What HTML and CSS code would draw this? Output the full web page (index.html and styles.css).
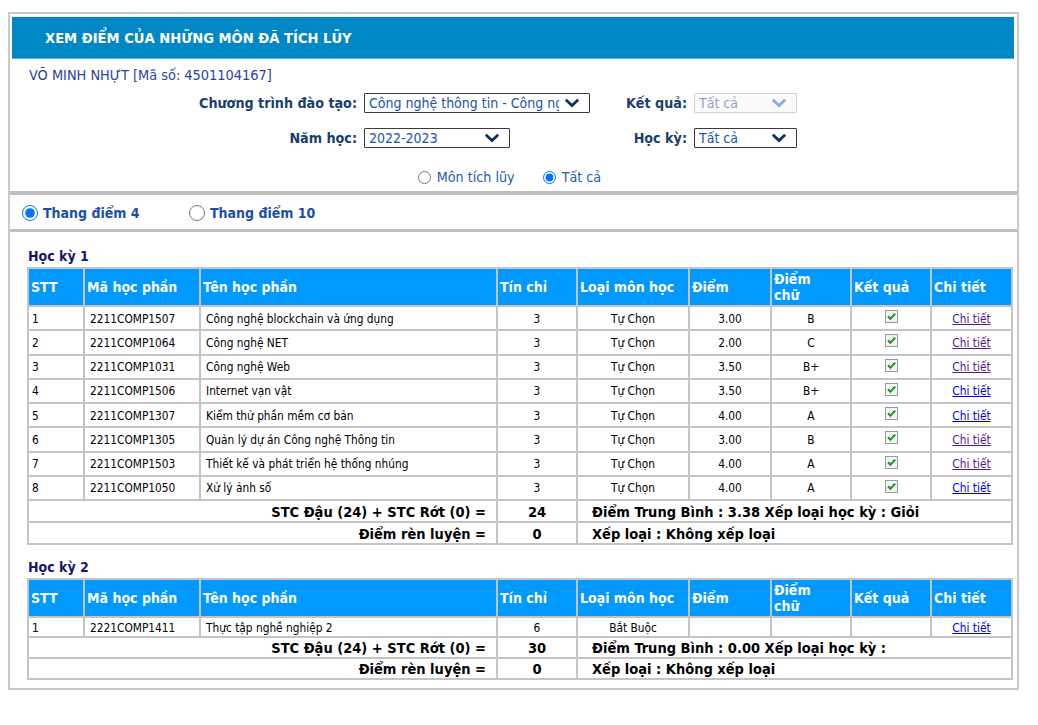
FILE: index.html
```html
<!DOCTYPE html>
<html lang="vi">
<head>
<meta charset="utf-8">
<title>Xem điểm</title>
<link rel="stylesheet" href="styles.css">
</head>
<body>
<div class="panel">
  <div class="titlebar">XEM ĐIỂM CỦA NHỮNG MÔN ĐÃ TÍCH LŨY</div>
  <div class="student">VÕ MINH NHỰT [Mã số: 4501104167]</div>

  <div class="filters">
    <div class="flabel">Chương trình đào tạo:</div>
    <div class="fcell"><div class="sel sel-wide"><span class="sel-text">Công nghệ thông tin - Công nghệ phần mềm</span><svg class="chev" width="16" height="10" viewBox="0 0 16 10"><path d="M1.8 1.8 L8 7.6 L14.2 1.8" fill="none" stroke="#0d2f6b" stroke-width="2.8"/></svg></div></div>
    <div class="flabel">Kết quả:</div>
    <div class="fcell"><div class="sel sel-small disabled"><span class="sel-text">Tất cả</span><svg class="chev" width="16" height="10" viewBox="0 0 16 10"><path d="M1.8 1.8 L8 7.6 L14.2 1.8" fill="none" stroke="#86ace6" stroke-width="2.8"/></svg></div></div>

    <div class="flabel">Năm học:</div>
    <div class="fcell"><div class="sel sel-mid"><span class="sel-text">2022-2023</span><svg class="chev" width="16" height="10" viewBox="0 0 16 10"><path d="M1.8 1.8 L8 7.6 L14.2 1.8" fill="none" stroke="#0d2f6b" stroke-width="2.8"/></svg></div></div>
    <div class="flabel">Học kỳ:</div>
    <div class="fcell"><div class="sel sel-small"><span class="sel-text">Tất cả</span><svg class="chev" width="16" height="10" viewBox="0 0 16 10"><path d="M1.8 1.8 L8 7.6 L14.2 1.8" fill="none" stroke="#0d2f6b" stroke-width="2.8"/></svg></div></div>
  </div>

  <div class="scope">
    <label class="opt"><input type="radio" name="scope">Môn tích lũy</label>
    <label class="opt"><input type="radio" name="scope" checked>Tất cả</label>
  </div>

  <div class="bar bar-thick"></div>

  <div class="scale">
    <label class="scale-opt"><input type="radio" name="scale" checked>Thang điểm 4</label>
    <label class="scale-opt"><input type="radio" name="scale">Thang điểm 10</label>
  </div>

  <div class="bar"></div>

  <div class="semester">
    <div class="sem-title">Học kỳ 1</div>
    <table class="grades">
      <thead>
        <tr class="head">
          <th class="c-stt">STT</th>
          <th class="c-ma">Mã học phần</th>
          <th class="c-ten">Tên học phần</th>
          <th class="c-tc">Tín chỉ</th>
          <th class="c-loai">Loại môn học</th>
          <th class="c-diem">Điểm</th>
          <th class="c-chu">Điểm<br>chữ</th>
          <th class="c-kq">Kết quả</th>
          <th class="c-ct">Chi tiết</th>
        </tr>
      </thead>
      <tbody>
        <tr class="row"><td class="stt">1</td><td class="code">2211COMP1507</td><td class="name">Công nghệ blockchain và ứng dụng</td><td class="ctr">3</td><td class="ctr">Tự Chọn</td><td class="ctr">3.00</td><td class="ctr">B</td><td class="ctr"><svg class="chk" width="13" height="13" viewBox="0 0 13 13"><rect x="0.5" y="0.5" width="12" height="12" fill="#f3f3f3" stroke="#9a9a9a"/><path d="M3 6.3 L5.4 8.8 L10.2 3.6" fill="none" stroke="#1f9a1f" stroke-width="2.1"/></svg></td><td class="ctr"><a href="#" class="lk visited">Chi tiết</a></td></tr>
        <tr class="row"><td class="stt">2</td><td class="code">2211COMP1064</td><td class="name">Công nghệ NET</td><td class="ctr">3</td><td class="ctr">Tự Chọn</td><td class="ctr">2.00</td><td class="ctr">C</td><td class="ctr"><svg class="chk" width="13" height="13" viewBox="0 0 13 13"><rect x="0.5" y="0.5" width="12" height="12" fill="#f3f3f3" stroke="#9a9a9a"/><path d="M3 6.3 L5.4 8.8 L10.2 3.6" fill="none" stroke="#1f9a1f" stroke-width="2.1"/></svg></td><td class="ctr"><a href="#" class="lk visited">Chi tiết</a></td></tr>
        <tr class="row"><td class="stt">3</td><td class="code">2211COMP1031</td><td class="name">Công nghệ Web</td><td class="ctr">3</td><td class="ctr">Tự Chọn</td><td class="ctr">3.50</td><td class="ctr">B+</td><td class="ctr"><svg class="chk" width="13" height="13" viewBox="0 0 13 13"><rect x="0.5" y="0.5" width="12" height="12" fill="#f3f3f3" stroke="#9a9a9a"/><path d="M3 6.3 L5.4 8.8 L10.2 3.6" fill="none" stroke="#1f9a1f" stroke-width="2.1"/></svg></td><td class="ctr"><a href="#" class="lk visited">Chi tiết</a></td></tr>
        <tr class="row"><td class="stt">4</td><td class="code">2211COMP1506</td><td class="name">Internet vạn vật</td><td class="ctr">3</td><td class="ctr">Tự Chọn</td><td class="ctr">3.50</td><td class="ctr">B+</td><td class="ctr"><svg class="chk" width="13" height="13" viewBox="0 0 13 13"><rect x="0.5" y="0.5" width="12" height="12" fill="#f3f3f3" stroke="#9a9a9a"/><path d="M3 6.3 L5.4 8.8 L10.2 3.6" fill="none" stroke="#1f9a1f" stroke-width="2.1"/></svg></td><td class="ctr"><a href="#" class="lk">Chi tiết</a></td></tr>
        <tr class="row"><td class="stt">5</td><td class="code">2211COMP1307</td><td class="name">Kiểm thử phần mềm cơ bản</td><td class="ctr">3</td><td class="ctr">Tự Chọn</td><td class="ctr">4.00</td><td class="ctr">A</td><td class="ctr"><svg class="chk" width="13" height="13" viewBox="0 0 13 13"><rect x="0.5" y="0.5" width="12" height="12" fill="#f3f3f3" stroke="#9a9a9a"/><path d="M3 6.3 L5.4 8.8 L10.2 3.6" fill="none" stroke="#1f9a1f" stroke-width="2.1"/></svg></td><td class="ctr"><a href="#" class="lk">Chi tiết</a></td></tr>
        <tr class="row"><td class="stt">6</td><td class="code">2211COMP1305</td><td class="name">Quản lý dự án Công nghệ Thông tin</td><td class="ctr">3</td><td class="ctr">Tự Chọn</td><td class="ctr">3.00</td><td class="ctr">B</td><td class="ctr"><svg class="chk" width="13" height="13" viewBox="0 0 13 13"><rect x="0.5" y="0.5" width="12" height="12" fill="#f3f3f3" stroke="#9a9a9a"/><path d="M3 6.3 L5.4 8.8 L10.2 3.6" fill="none" stroke="#1f9a1f" stroke-width="2.1"/></svg></td><td class="ctr"><a href="#" class="lk visited">Chi tiết</a></td></tr>
        <tr class="row"><td class="stt">7</td><td class="code">2211COMP1503</td><td class="name">Thiết kế và phát triển hệ thống nhúng</td><td class="ctr">3</td><td class="ctr">Tự Chọn</td><td class="ctr">4.00</td><td class="ctr">A</td><td class="ctr"><svg class="chk" width="13" height="13" viewBox="0 0 13 13"><rect x="0.5" y="0.5" width="12" height="12" fill="#f3f3f3" stroke="#9a9a9a"/><path d="M3 6.3 L5.4 8.8 L10.2 3.6" fill="none" stroke="#1f9a1f" stroke-width="2.1"/></svg></td><td class="ctr"><a href="#" class="lk visited">Chi tiết</a></td></tr>
        <tr class="row"><td class="stt">8</td><td class="code">2211COMP1050</td><td class="name">Xử lý ảnh số</td><td class="ctr">3</td><td class="ctr">Tự Chọn</td><td class="ctr">4.00</td><td class="ctr">A</td><td class="ctr"><svg class="chk" width="13" height="13" viewBox="0 0 13 13"><rect x="0.5" y="0.5" width="12" height="12" fill="#f3f3f3" stroke="#9a9a9a"/><path d="M3 6.3 L5.4 8.8 L10.2 3.6" fill="none" stroke="#1f9a1f" stroke-width="2.1"/></svg></td><td class="ctr"><a href="#" class="lk">Chi tiết</a></td></tr>
        <tr class="sum"><td colspan="3" class="sum-label">STC Đậu (24) + STC Rớt (0) =</td><td class="sum-val">24</td><td colspan="5" class="sum-text">Điểm Trung Bình : 3.38 Xếp loại học kỳ : Giỏi</td></tr>
        <tr class="sum"><td colspan="3" class="sum-label">Điểm rèn luyện =</td><td class="sum-val">0</td><td colspan="5" class="sum-text">Xếp loại : Không xếp loại</td></tr>
      </tbody>
    </table>

    <div class="sem-title sem-next">Học kỳ 2</div>
    <table class="grades">
      <thead>
        <tr class="head">
          <th class="c-stt">STT</th>
          <th class="c-ma">Mã học phần</th>
          <th class="c-ten">Tên học phần</th>
          <th class="c-tc">Tín chỉ</th>
          <th class="c-loai">Loại môn học</th>
          <th class="c-diem">Điểm</th>
          <th class="c-chu">Điểm<br>chữ</th>
          <th class="c-kq">Kết quả</th>
          <th class="c-ct">Chi tiết</th>
        </tr>
      </thead>
      <tbody>
        <tr class="row row-plain"><td class="stt">1</td><td class="code">2221COMP1411</td><td class="name">Thực tập nghề nghiệp 2</td><td class="ctr">6</td><td class="ctr">Bắt Buộc</td><td class="ctr"></td><td class="ctr"></td><td class="ctr"></td><td class="ctr"><a href="#" class="lk">Chi tiết</a></td></tr>
        <tr class="sum sum-tight"><td colspan="3" class="sum-label">STC Đậu (24) + STC Rớt (0) =</td><td class="sum-val">30</td><td colspan="5" class="sum-text">Điểm Trung Bình : 0.00 Xếp loại học kỳ :</td></tr>
        <tr class="sum sum-tight"><td colspan="3" class="sum-label">Điểm rèn luyện =</td><td class="sum-val">0</td><td colspan="5" class="sum-text">Xếp loại : Không xếp loại</td></tr>
      </tbody>
    </table>
  </div>
</div>
</body>
</html>
```

FILE: styles.css
```css
* { box-sizing: border-box; }

body {
  margin: 0;
  padding: 12px 0 0 8px;
  font-family: "DejaVu Sans Condensed", Tahoma, "DejaVu Sans", sans-serif;
  font-size: 13px;
  color: #000;
  background: #fff;
}

.panel {
  width: 1011px;
  border: 2px solid #c9c9c9;
  padding-bottom: 8px;
}

.titlebar {
  margin: 3px 3px 0 2px;
  height: 42px;
  line-height: 41px;
  padding-left: 33px;
  background: #0088c6;
  border-bottom: 1px solid #5db5e2;
  color: #fff;
  font-weight: bold;
  font-size: 14.6px;
}

.student {
  padding: 8px 0 0 19px;
  line-height: 16px;
  color: #2a43a3;
  font-size: 14.4px;
}

.filters {
  margin-top: 10px;
  display: grid;
  grid-template-columns: 347px 226px 90px 103px;
  column-gap: 7px;
  row-gap: 15px;
  align-items: center;
}

.flabel {
  text-align: right;
  font-weight: bold;
  color: #17406f;
  font-size: 14.2px;
}

.sel {
  position: relative;
  height: 20px;
  border: 1px solid #3a3a3a;
  border-radius: 1px;
  background: #fff;
  padding: 0 30px 0 4px;
  line-height: 18px;
  color: #1b55ad;
  font-size: 14px;
  white-space: nowrap;
  overflow: hidden;
}

.sel-wide { width: 226px; }
.sel-mid { width: 146px; }
.sel-small { width: 103px; }

.sel.disabled {
  border-color: #d4d4d4;
  color: #8aa4c8;
  background: #fafafa;
}

.sel-text {
  display: block;
  overflow: hidden;
  text-overflow: clip;
}

.chev {
  position: absolute;
  right: 9px;
  top: 4px;
}

.scope {
  margin-top: 21px;
  padding-right: 8px;
  display: flex;
  justify-content: center;
  line-height: 16px;
  height: 16px;
}

.opt {
  display: inline-flex;
  align-items: center;
  color: #1f5bb0;
  font-size: 14.2px;
  margin: 0 14px;
}

.opt input {
  width: 13px;
  height: 13px;
  margin: 0 6px 0 0;
}

.bar {
  height: 3px;
  background: #bfbfbf;
}

.bar-thick {
  margin-top: 6px;
  height: 4px;
}

.scale {
  display: flex;
  align-items: center;
  height: 34px;
  padding: 2px 0 0 12px;
}

.scale-opt {
  display: inline-flex;
  align-items: center;
  font-weight: bold;
  font-size: 14px;
  color: #1c4fa8;
  margin-right: 40px;
  min-width: 127px;
}

.scale-opt input {
  width: 16px;
  height: 16px;
  margin: 0 5px 0 0;
}

.semester {
  padding-left: 17px;
}

.sem-title {
  margin-top: 16px;
  margin-bottom: 3px;
  line-height: 16px;
  font-weight: bold;
  font-size: 14px;
  color: #16166e;
  padding-left: 1px;
}

.sem-next {
  margin-top: 14px;
}

.grades {
  width: 984px;
  table-layout: fixed;
  border-collapse: separate;
  border-spacing: 0;
  border: 1px solid #c4c4c4;
}

.grades th,
.grades td {
  border: 1px solid #c4c4c4;
}

.grades th {
  background: #0099ff;
  color: #fff;
  font-weight: bold;
  font-size: 14px;
  text-align: left;
  padding: 1px 2px;
  line-height: 16px;
  vertical-align: middle;
}

.head { height: 38px; }

.c-stt { width: 56px; }
.c-ma { width: 116px; }
.c-ten { width: 297px; }
.c-tc { width: 80px; }
.c-loai { width: 112px; }
.c-diem { width: 82px; }
.c-chu { width: 80px; }
.c-kq { width: 80px; }
.c-ct { width: 81px; }

.grades td {
  font-size: 11.8px;
  padding: 2px 5px 0;
  line-height: 15px;
  vertical-align: middle;
}

.row { height: 24.25px; }
.row-plain { height: 20px; }

.grades td.stt { padding-left: 3px; }
.grades td.code { padding-left: 5px; }
.grades td.name { padding-left: 5px; }
.grades td.ctr { text-align: center; }

.chk {
  display: block;
  margin: -5px auto 0;
}

.lk { color: #0000ee; }
.lk.visited { color: #551a8b; }

.sum { height: 22px; }
.sum-tight { height: 21px; }

.grades td.sum-label,
.grades td.sum-val,
.grades td.sum-text {
  font-weight: bold;
  font-size: 14.5px;
  line-height: 16px;
  padding-top: 1px;
}

.grades td.sum-label {
  text-align: right;
  padding-right: 10px;
}

.grades td.sum-val { text-align: center; }

.grades td.sum-text { padding-left: 14px; }
```
